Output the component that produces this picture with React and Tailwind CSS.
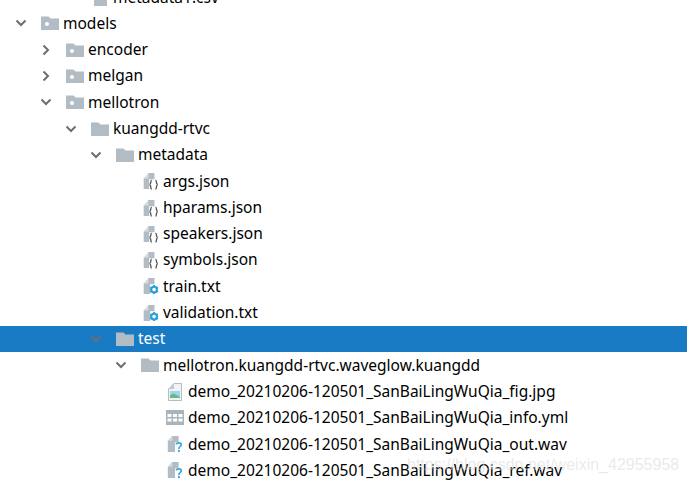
import React from "react";

const FolderIcon = ({ dot }) => (
  <svg width="18" height="14" viewBox="0 0 18 14">
    <path d="M0 0.5H7.5L9.5 2.5H18V14H0Z" fill="#b1bcc4" />
    {dot && <circle cx="6" cy="8" r="2" fill="#ffffff" />}
  </svg>
);

const Chevron = ({ open }) => (
  <svg width="12" height="12" viewBox="0 0 12 12" fill="none" stroke="#6e6e6e" strokeWidth="2">
    {open ? <path d="M1.5 3.5L6 8L10.5 3.5" /> : <path d="M3.5 1.5L8 6L3.5 10.5" />}
  </svg>
);

const JsonIcon = () => (
  <svg width="20" height="18" viewBox="0 0 20 18">
    <path d="M8 0H15V7H9V18H3V6H8Z" fill="#b1bcc4" />
    <path d="M3 6L8 0.5V6Z" fill="#d5dbdf" />
    <path d="M12 8C10 8 11.8 12.5 9.5 13C11.8 13.5 10 18 12 18M16 8C18 8 16.2 12.5 18.5 13C16.2 13.5 18 18 16 18" fill="none" stroke="#555555" strokeWidth="1.5" />
  </svg>
);

const ConfigIcon = () => (
  <svg width="20" height="18" viewBox="0 0 20 18">
    <path d="M8 0H15V7H10V18H3V6H8Z" fill="#b1bcc4" />
    <path d="M3 6L8 0.5V6Z" fill="#d5dbdf" />
    <circle cx="14.5" cy="13" r="3.2" fill="none" stroke="#2a9fdc" strokeWidth="2.4" />
    <path d="M14.5 8V10M14.5 16V18M10.2 10.5L11.9 11.5M17.1 14.5L18.8 15.5M10.2 15.5L11.9 14.5M17.1 11.5L18.8 10.5" stroke="#2a9fdc" strokeWidth="2" />
  </svg>
);

const ImageIcon = () => (
  <svg width="18" height="18" viewBox="0 0 18 18">
    <path d="M8 0.5H15.5V17.5H2.5V6Z" fill="#f1f3f4" stroke="#b1bcc4" />
    <path d="M2.5 6L8 0.5V6Z" fill="#c3cbd1" />
    <path d="M4 8H14V15H4Z" fill="#9fd3ee" />
    <path d="M4 15V12.5L7.5 10.5L14 14V15Z" fill="#66bb7c" />
  </svg>
);

const TableIcon = () => (
  <svg width="18" height="15" viewBox="0 0 18 15">
    <path d="M0 0H18V15H0Z" fill="#aab4bb" />
    <path d="M1.5 4H5.5V7H1.5ZM7 4H11V7H7ZM12.5 4H16.5V7H12.5ZM1.5 8.5H5.5V11.5H1.5ZM7 8.5H11V11.5H7ZM12.5 8.5H16.5V11.5H12.5Z" fill="#ffffff" />
  </svg>
);

const UnknownIcon = () => (
  <svg width="20" height="18" viewBox="0 0 20 18">
    <path d="M7 0H14V7H10V18H2V5.5Z" fill="#b1bcc4" />
    <path d="M2 5.5L7 0.5V5.5Z" fill="#d5dbdf" />
    <path d="M11.5 9.5C11.5 7.2 17 7.2 17 9.8C17 12 14.3 11.5 14.3 14.5" fill="none" stroke="#35a5dd" strokeWidth="1.8" />
    <path d="M13.3 15.5H15.3V18H13.3Z" fill="#35a5dd" />
  </svg>
);

const FileDocIcon = () => (
  <svg width="18" height="18" viewBox="0 0 18 18">
    <path d="M3 0H16V18H3Z" fill="#b1bcc4" />
    <path d="M5 8H14M5 11H14" stroke="#6e7b85" strokeWidth="1.2" />
  </svg>
);

const rows = [
  { depth: 2, name: "metadata1.csv", icon: <FileDocIcon /> },
  { depth: 0, name: "models", open: true, icon: <FolderIcon dot /> },
  { depth: 1, name: "encoder", open: false, icon: <FolderIcon dot /> },
  { depth: 1, name: "melgan", open: false, icon: <FolderIcon dot /> },
  { depth: 1, name: "mellotron", open: true, icon: <FolderIcon dot /> },
  { depth: 2, name: "kuangdd-rtvc", open: true, icon: <FolderIcon /> },
  { depth: 3, name: "metadata", open: true, icon: <FolderIcon /> },
  { depth: 4, name: "args.json", icon: <JsonIcon /> },
  { depth: 4, name: "hparams.json", icon: <JsonIcon /> },
  { depth: 4, name: "speakers.json", icon: <JsonIcon /> },
  { depth: 4, name: "symbols.json", icon: <JsonIcon /> },
  { depth: 4, name: "train.txt", icon: <ConfigIcon /> },
  { depth: 4, name: "validation.txt", icon: <ConfigIcon /> },
  { depth: 3, name: "test", open: true, selected: true, icon: <FolderIcon /> },
  { depth: 4, name: "mellotron.kuangdd-rtvc.waveglow.kuangdd", open: true, icon: <FolderIcon /> },
  { depth: 5, name: "demo_20210206-120501_SanBaiLingWuQia_fig.jpg", icon: <ImageIcon /> },
  { depth: 5, name: "demo_20210206-120501_SanBaiLingWuQia_info.yml", icon: <TableIcon /> },
  { depth: 5, name: "demo_20210206-120501_SanBaiLingWuQia_out.wav", icon: <UnknownIcon /> },
  { depth: 5, name: "demo_20210206-120501_SanBaiLingWuQia_ref.wav", icon: <UnknownIcon /> },
];

const App = () => {
  return (
    <div className="relative h-[482px] w-[687px] overflow-hidden bg-white font-['Noto_Sans',sans-serif] text-[15.5px]">
      <div className="-mt-[16px]">
        {rows.map((row) => (
          <div
            key={row.name}
            className={`flex h-[26.3px] items-center ${row.selected ? "bg-[#1a7bc5] text-white" : "text-black"}`}
            style={{ paddingLeft: 13 + row.depth * 25 }}
          >
            <div className="flex w-[16px] justify-center">
              {row.open !== undefined && <Chevron open={row.open} />}
            </div>
            <div className="ml-[12px] flex w-[18px] justify-start">{row.icon}</div>
            <span className="ml-[4px] whitespace-nowrap">{row.name}</span>
          </div>
        ))}
      </div>
      <div className="absolute left-[407px] top-[453px] whitespace-nowrap font-['Liberation_Sans',sans-serif] text-[16px] text-[#dcdcdc]/60">
        https://blog.csdn.net/weixin_42955958
      </div>
    </div>
  );
};

export default App;
